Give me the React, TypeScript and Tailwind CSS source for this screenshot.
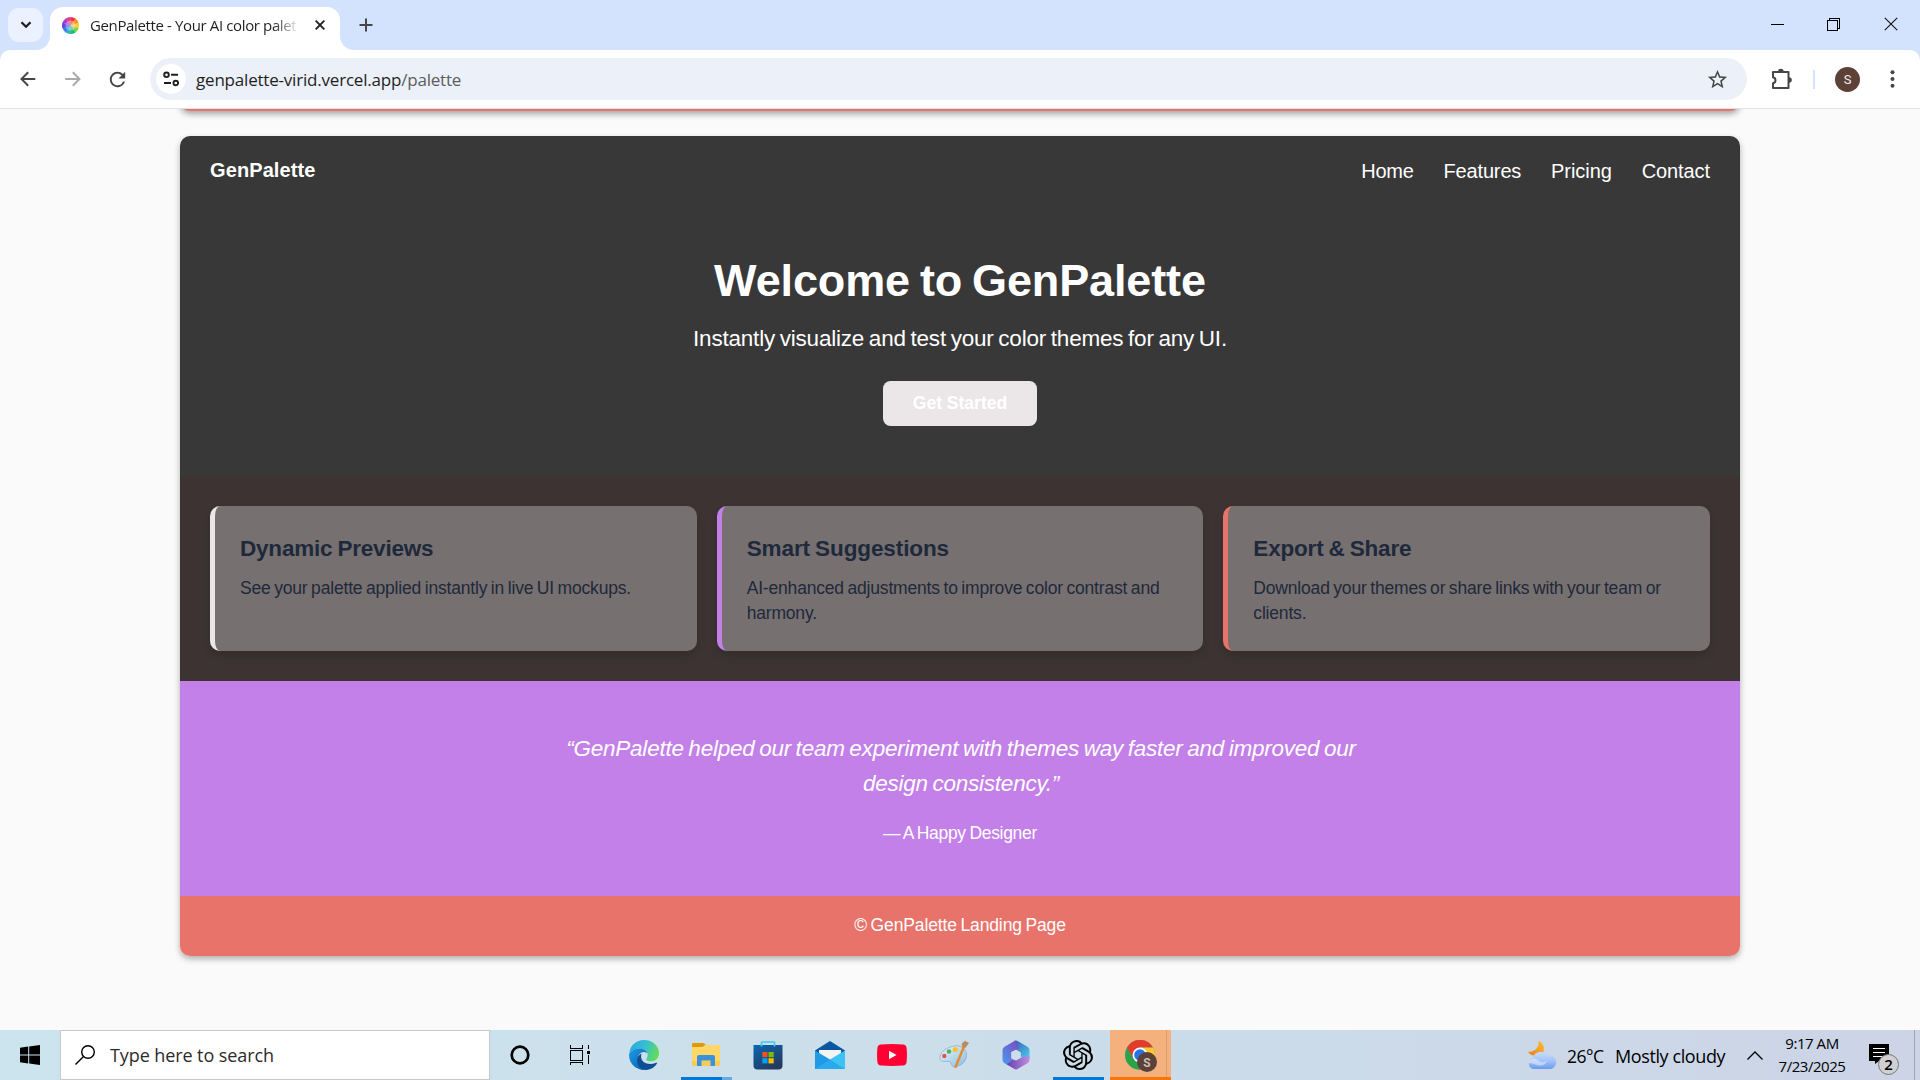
import type { ReactNode } from "react";
import { SiOpenai } from "react-icons/si";
import { MdStarBorder, MdRefresh } from "react-icons/md";

function TabFavicon() {
  const colors = ["#f0303e", "#f98d2b", "#fbd02f", "#7ed348", "#27b86a", "#28b5c8", "#3d7fe8", "#6a45d8", "#a13fd0", "#e03c8a"];
  return (
    <svg viewBox="-10 -10 20 20" className="h-[17px] w-[17px]">
      {colors.map((c, i) => {
        const a = ((i * 36 - 90) * Math.PI) / 180;
        const b = (((i + 1) * 36 - 88) * Math.PI) / 180;
        return (
          <g key={c} fill={c}>
            <path d={`M0 0L${10 * Math.cos(a)} ${10 * Math.sin(a)}A10 10 0 0 1 ${10 * Math.cos(b)} ${10 * Math.sin(b)}Z`} />
            <path fill="#fff" opacity=".35" d={`M0 0L${6 * Math.cos(a)} ${6 * Math.sin(a)}A6 6 0 0 1 ${6 * Math.cos(b)} ${6 * Math.sin(b)}Z`} />
          </g>
        );
      })}
    </svg>
  );
}

function TabStrip() {
  return (
    <div className="flex h-[50px] items-start bg-[#d3e2fd]">
      <div className="mt-2 ml-2 flex h-[34px] w-[35px] items-center justify-center rounded-[11px] bg-[#ebf1fe]">
        <svg viewBox="0 0 12 8" className="h-2 w-3" fill="none" stroke="#1f1f1f" strokeWidth="2.3">
          <path d="M1.5 1.2L6 5.7L10.5 1.2" />
        </svg>
      </div>
      <div className="relative mt-[7px] ml-[7px] flex h-[43px] w-[290px] items-center rounded-t-[13px] bg-white pb-[7px] pl-3">
        <svg viewBox="0 0 14 14" className="absolute bottom-0 -left-[14px] h-[14px] w-[14px]" fill="#fff">
          <path d="M14 0V14H0A14 14 0 0 0 14 0Z" />
        </svg>
        <svg viewBox="0 0 14 14" className="absolute -right-[14px] bottom-0 h-[14px] w-[14px]" fill="#fff">
          <path d="M0 0V14H14A14 14 0 0 1 0 0Z" />
        </svg>
        <TabFavicon />
        <span className="ml-[11px] w-[209px] overflow-hidden bg-gradient-to-r from-[#1f1f1f] from-88% to-transparent bg-clip-text text-[15px] leading-5 tracking-[-0.37px] whitespace-nowrap text-transparent">
          GenPalette - Your AI color palet
        </span>
        <svg viewBox="0 0 10 10" className="ml-4 h-[10px] w-[10px]" stroke="#1f1f1f" strokeWidth="1.9">
          <path d="M.7 .7L9.3 9.3M9.3 .7L.7 9.3" />
        </svg>
      </div>
      <svg viewBox="0 0 14 14" className="mt-[18px] ml-[19px] h-[14px] w-[14px]" stroke="#444746" strokeWidth="2">
        <path d="M7 .5V13.5M.5 7H13.5" />
      </svg>
      <div className="mt-[17px] ml-auto flex items-center pr-[22px]">
        <svg viewBox="0 0 14 14" className="mr-[42px] h-[14px] w-[14px]" stroke="#000" strokeWidth="1" shapeRendering="crispEdges">
          <path d="M0 7.5H13" />
        </svg>
        <svg viewBox="0 0 14 14" className="mr-[43px] h-[14px] w-[14px]" fill="none" stroke="#000" strokeWidth="1" shapeRendering="crispEdges">
          <path d="M.5 3.5H10.5V13.5H.5ZM2.5 3V1.5H12.5V11.5H11" />
        </svg>
        <svg viewBox="0 0 14 14" className="h-[14px] w-[14px]" stroke="#111" strokeWidth="1.1">
          <path d="M.8 .8L13.2 13.2M13.2 .8L.8 13.2" />
        </svg>
      </div>
    </div>
  );
}

function Toolbar() {
  return (
    <div className="bg-[#d3e2fd]">
      <div className="flex h-[59px] items-center rounded-t-[10px] border-b border-[#dfe1e3] bg-white">
        <svg viewBox="0 0 16 16" className="ml-5 h-4 w-4" fill="none" stroke="#444746" strokeWidth="2">
          <path d="M15.3 8H1.8M8.2 1.3L1.5 8L8.2 14.7" />
        </svg>
        <svg viewBox="0 0 16 16" className="ml-[29px] h-4 w-4" fill="none" stroke="#a9abab" strokeWidth="2">
          <path d="M.2 8H14M7.8 1.3L14.5 8L7.8 14.7" />
        </svg>
        <MdRefresh className="ml-[25px] h-[23px] w-[23px] text-[#444746]" />
        <div className="ml-[21px] flex h-[42px] w-[1597px] items-center rounded-full bg-[#ecf0f9] pl-[6px]">
          <div className="flex h-[30px] w-[30px] items-center justify-center rounded-full bg-white">
            <svg viewBox="0 0 16 16" className="h-4 w-4" fill="none" stroke="#1f1f1f" strokeWidth="1.9">
              <circle cx="3.5" cy="3.8" r="2.3" />
              <path d="M8 3.8H15M1 12H8" />
              <circle cx="12.8" cy="12" r="2.3" />
            </svg>
          </div>
          <div className="mt-px ml-[10px] text-[17px] leading-6 tracking-[-0.2px] text-[#1f1f1f]">
            genpalette-virid.vercel.app<span className="text-[#5a5d60]">/palette</span>
          </div>
          <MdStarBorder className="mr-[18px] ml-auto h-[23px] w-[23px] text-[#444746]" />
        </div>
        <svg viewBox="0 0 22 22" className="ml-6 h-[22px] w-[22px]" fill="none" stroke="#444746" strokeWidth="2" strokeLinejoin="round">
          <path d="M2 4H17.5V20H2V15.2C5.3 14.6 5.3 9.8 2 9.2Z" />
          <path fill="#444746" stroke="none" d="M7 3.5A2.8 2.8 0 0 1 12.6 3.5ZM18 9.2A2.8 2.8 0 0 1 18 14.8Z" />
        </svg>
        <div className="ml-5 h-[19px] w-[2px] bg-[#d3e2fd]" />
        <div className="ml-5 flex h-[25px] w-[25px] items-center justify-center rounded-full bg-[#5d4037] font-[Roboto] text-[13px] leading-none text-[#f1eeec]">S</div>
        <svg viewBox="0 0 5 18" className="ml-[30px] h-[18px] w-[5px]" fill="#444746">
          <circle cx="2.5" cy="2.2" r="2" />
          <circle cx="2.5" cy="9" r="2" />
          <circle cx="2.5" cy="15.8" r="2" />
        </svg>
      </div>
    </div>
  );
}

const navItems = [
  { label: "Home", cls: "tracking-[-0.25px]" },
  { label: "Features", cls: "tracking-[-0.14px]" },
  { label: "Pricing", cls: "tracking-[-0.05px]" },
  { label: "Contact", cls: "tracking-[-0.08px]" },
];

const features = [
  { title: "Dynamic Previews", titleCls: "tracking-[-0.2px]", lines: ["See your palette applied instantly in live UI mockups."], border: "border-[#ebe6e7]" },
  { title: "Smart Suggestions", titleCls: "tracking-[-0.1px]", lines: ["AI-enhanced adjustments to improve color contrast and", "harmony."], border: "border-[#c380e8]" },
  { title: "Export & Share", titleCls: "tracking-[-0.18px]", lines: ["Download your themes or share links with your team or", "clients."], border: "border-[#e7736a]" },
];

function LandingPreview() {
  return (
    <div className="mt-[25px] w-[1560px] overflow-hidden rounded-[10px] font-['Liberation_Sans',sans-serif] text-white shadow-[0_3px_6px_rgba(0,0,0,0.3)]">
      <div className="bg-[#383838]">
        <nav className="flex h-[70px] items-center justify-between px-[30px]">
          <div className="pb-[2px] text-[20px] leading-[30px] font-bold tracking-[0.1px]">GenPalette</div>
          <div className="flex gap-[29.800px] text-[20px] leading-[30px]">
            {navItems.map((n) => (
              <span key={n.label} className={n.cls}>{n.label}</span>
            ))}
          </div>
        </nav>
        <section className="flex flex-col items-center pt-[50px] pb-[50px]">
          <h1 className="text-[45px] leading-[50px] font-bold tracking-[-0.12px] [word-spacing:-2.5px]">Welcome to GenPalette</h1>
          <p className="mt-[15px] text-[22.5px] leading-[35px] tracking-[-0.21px] [word-spacing:-1.3px]">
            Instantly visualize and test your color themes for any UI.
          </p>
          <button className="mt-[25px] h-[45px] w-[154px] rounded-[7.5px] bg-[#ebe6e7] text-[17.5px] leading-[25px] font-bold">Get Started</button>
        </section>
      </div>
      <section className="grid grid-cols-3 gap-5 bg-[#3d3333] p-[30px]">
        {features.map((f) => (
          <div key={f.title} className={`h-[145px] rounded-[10px] border-l-[5px] bg-[#777070] p-[25px] text-[#1e293b] shadow-[0_5px_8px_rgba(0,0,0,0.14)] ${f.border}`}>
            <h3 className={`text-[22.5px] leading-[35px] font-bold [word-spacing:-1px] ${f.titleCls}`}>{f.title}</h3>
            <p className="mt-[10px] text-[17.5px] leading-[25px] tracking-[-0.18px] whitespace-nowrap [word-spacing:-1.1px]">
              {f.lines.map((l) => (
                <span key={l} className="block">{l}</span>
              ))}
            </p>
          </div>
        ))}
      </section>
      <section className="flex h-[215px] flex-col items-center bg-[#c380e8] pt-[50px] pl-[2px] text-center">
        <p className="text-[22.5px] leading-[35px] tracking-[-0.23px] whitespace-nowrap italic [word-spacing:-1.4px]">
          “GenPalette helped our team experiment with themes way faster and improved our
          <br />
          design consistency.”
        </p>
        <p className="mt-5 pr-[2px] text-[17.5px] leading-[25px] tracking-[-0.3px] [word-spacing:-1px]">— A Happy Designer</p>
      </section>
      <footer className="h-[60px] bg-[#e7736a] pt-[17px] text-center text-[17.5px] leading-[25px] tracking-[-0.13px] [word-spacing:-1.1px]">
        © GenPalette Landing Page
      </footer>
    </div>
  );
}

function Slot({ children, bar, className = "" }: { children: ReactNode; bar?: ReactNode; className?: string }) {
  return (
    <div className={`relative flex h-[50px] w-[62px] shrink-0 items-center justify-center ${className}`}>
      {children}
      {bar}
    </div>
  );
}

function EdgeIcon() {
  return (
    <svg viewBox="0 0 30 30" className="h-[30px] w-[30px]">
      <defs>
        <linearGradient id="edgeTop" x1="0" y1=".3" x2="1" y2=".6">
          <stop offset="0" stopColor="#2aa8e0" />
          <stop offset=".5" stopColor="#35c1d0" />
          <stop offset="1" stopColor="#66dd4f" />
        </linearGradient>
        <linearGradient id="edgeLow" x1="0" y1="0" x2="1" y2="1">
          <stop offset="0" stopColor="#1ba0e6" />
          <stop offset="1" stopColor="#0a57ad" />
        </linearGradient>
      </defs>
      <path fill="url(#edgeTop)" d="M.3 13C1.2 5.5 7.2 0 15 0C24 0 30 6.2 30 13.2C30 18.2 26.400 21.300 22.300 21.300C18.800 21.300 17.300 20.200 17.300 19.200C17.300 18.300 18.700 17.700 18.700 15.300C18.700 12 15.400 8.600 10.700 8.600C5.500 8.600 1.500 11.300 .3 13Z" />
      <path fill="url(#edgeLow)" d="M0 15C.4 11 5.200 8.500 10.600 8.500C14 8.500 17.500 10.500 18.200 13C13.500 9.900 8.600 14 8.600 19.200C8.600 24 12.200 28.400 16.500 29.900C7.500 30.500 0 24 0 15Z" />
      <path fill="#0e4f94" d="M12.500 13.500C9.700 14.700 8 17.300 8 20C8 25.800 12 30 17.200 30C22 29.700 25.800 27 28 23.500C28.300 22.900 27.800 22.400 27 22.800C20.500 25.700 11.500 23.500 12.100 15.800Z" />
    </svg>
  );
}

function ExplorerIcon() {
  return (
    <svg viewBox="0 0 28 24" className="-mt-px h-6 w-7">
      <path fill="#dd9a0b" d="M0 1A1 1 0 0 1 1 0H11.500L13.500 1.500L12 5H0Z" />
      <path fill="#ffd766" d="M0 4H10.500L13 2H27A1 1 0 0 1 28 3V22A1 1 0 0 1 27 23H1A1 1 0 0 1 0 22Z" />
      <path fill="#f9cb52" d="M0 18H28V22A1 1 0 0 1 27 23H1A1 1 0 0 1 0 22Z" />
      <path fill="#3a92dc" d="M5 14A2 2 0 0 1 7 12H21A2 2 0 0 1 23 14V23H18.500V17.500H9.500V23H5Z" />
    </svg>
  );
}

function StoreIcon() {
  return (
    <svg viewBox="0 0 30 30" className="h-[30px] w-[30px]">
      <defs>
        <linearGradient id="store" x1="0" y1="0" x2=".6" y2="1">
          <stop offset="0" stopColor="#0b67b5" />
          <stop offset="1" stopColor="#243a5e" />
        </linearGradient>
      </defs>
      <path fill="url(#store)" d="M.5 5H29.500V25.500A4 4 0 0 1 25.500 29.500H4.500A4 4 0 0 1 .5 25.500Z" />
      <path fill="none" stroke="#3ec9f4" strokeWidth="1.700" d="M8.500 6.500V2.700A.7 .7 0 0 1 9.200 2H20.800A.7 .7 0 0 1 21.500 2.700V6.500" />
      <path fill="#f25022" d="M9.300 12H14.500V17.200H9.300Z" />
      <path fill="#7fba00" d="M15.500 12H20.700V17.200H15.500Z" />
      <path fill="#00a4ef" d="M9.300 18.200H14.500V23.400H9.300Z" />
      <path fill="#ffb900" d="M15.500 18.200H20.700V23.400H15.500Z" />
    </svg>
  );
}

function MailIcon() {
  return (
    <svg viewBox="0 0 30 28" className="h-7 w-[30px]">
      <path fill="#0a56a0" d="M0 9.500L15 0L30 9.500V12H0Z" />
      <path fill="#f3f3f4" d="M4 9H26V16L15 22L4 16Z" />
      <path fill="#1f9be6" d="M0 9.500L15 18.500L30 28H0Z" />
      <path fill="#3bc3f5" d="M30 9.500L15 18.500L30 28Z" />
      <path fill="#2aa9ee" d="M0 28L15 18.500L30 28Z" />
    </svg>
  );
}

function YoutubeIcon() {
  return (
    <svg viewBox="0 0 30 22" className="h-[22px] w-[30px]">
      <path fill="#ff0033" d="M4 .5Q15 -.4 26 .5Q29.300 .9 29.600 4Q30.300 11 29.600 18Q29.300 21.100 26 21.500Q15 22.400 4 21.500Q.7 21.100 .4 18Q-.3 11 .4 4Q.7 .9 4 .5Z" />
      <path fill="#fff" d="M12 6.700L19.500 11L12 15.300Z" />
    </svg>
  );
}

function PaintIcon() {
  return (
    <svg viewBox="0 0 30 30" className="h-[30px] w-[30px]">
      <defs>
        <linearGradient id="palette" x1="0" y1="0" x2="1" y2="1">
          <stop offset="0" stopColor="#eaf6fd" />
          <stop offset="1" stopColor="#8dbde0" />
        </linearGradient>
      </defs>
      <path fill="url(#palette)" stroke="#7fa9c9" strokeWidth=".7" d="M13 6.500C20 4 27 8 27.500 14C28 21 22 27 15 26.500C11 26 13 22.500 10.500 21.500C7 20.500 2 23.500 1 18C.5 13 6 8.500 13 6.500Z" />
      <circle cx="5.300" cy="16" r="2.200" fill="#e4564b" />
      <circle cx="10" cy="11.500" r="2.300" fill="#54b05a" />
      <circle cx="16.300" cy="9.500" r="2.600" fill="#f7c32c" />
      <path stroke="#e58a2d" strokeWidth="2.400" strokeLinecap="round" d="M25 6.500L16.500 27" />
      <path fill="#b98c5c" d="M22.500 4L26 .8L30 3L26.500 7.800L23.300 6.800Z" />
    </svg>
  );
}

function M365Icon() {
  return (
    <svg viewBox="0 0 28 30" className="h-[30px] w-7">
      <defs>
        <linearGradient id="mA" x1="0" y1="1" x2=".8" y2="0">
          <stop offset="0" stopColor="#4a9bf0" />
          <stop offset="1" stopColor="#7a4fc4" />
        </linearGradient>
        <linearGradient id="mB" x1="0" y1="0" x2="1" y2="1">
          <stop offset="0" stopColor="#3358a8" />
          <stop offset="1" stopColor="#4fd3f2" />
        </linearGradient>
        <linearGradient id="mC" x1="0" y1="0" x2="1" y2="0">
          <stop offset="0" stopColor="#5b3fae" />
          <stop offset="1" stopColor="#c48be0" />
        </linearGradient>
      </defs>
      <path fill="url(#mB)" d="M12 1.200Q14 0 16 1.200L25.500 6.700Q27.500 8 27.500 10V19.500L18.500 16.500V12.500L10 8Z" />
      <path fill="url(#mC)" d="M27.500 16V19Q27.500 22 25.500 23.200L16 28.800Q14 30 12 28.800L4 24L10 19L14 20.500L19 17.500Z" />
      <path fill="url(#mA)" d="M13.500 .6L17 8.500L9.500 12V21L4.500 24.300L2.500 23.200Q.5 22 .5 20V10Q.5 8 2.500 6.700L12 1.200Z" />
      <path fill="#cdddea" d="M14 9.700L18.700 12.300V17.700L14 20.300L9.300 17.700V12.300Z" />
    </svg>
  );
}

function ChromeIcon() {
  return (
    <svg viewBox="0 0 32 32" className="h-8 w-8">
      <circle cx="15" cy="15" r="15" fill="#2ba24c" />
      <path fill="#e33b2e" d="M2 7.500A15 15 0 0 1 28 7.500H15L8.500 18.700Z" />
      <path fill="#fcc934" d="M28 7.500A15 15 0 0 1 15 30L21.500 18.700L15 7.500Z" />
      <circle cx="15" cy="15" r="7.500" fill="#fff" />
      <circle cx="15" cy="15" r="5.800" fill="#2673e8" />
      <circle cx="22" cy="22" r="10" fill="#5d4037" />
      <text x="22" y="26.500" textAnchor="middle" fill="#c9bdb8" fontFamily="Roboto" fontSize="12" fontWeight="700">S</text>
    </svg>
  );
}

function WeatherIcon() {
  return (
    <svg viewBox="0 0 30 30" className="h-[30px] w-[30px]">
      <defs>
        <linearGradient id="moon" x1="1" y1="0" x2="0" y2="1">
          <stop offset="0" stopColor="#f9c031" />
          <stop offset="1" stopColor="#ee7d1c" />
        </linearGradient>
        <linearGradient id="cloud" x1="0" y1="0" x2="0" y2="1">
          <stop offset="0" stopColor="#c5dbfb" />
          <stop offset=".5" stopColor="#a6c4f6" />
          <stop offset="1" stopColor="#6c9bee" />
        </linearGradient>
      </defs>
      <path fill="url(#moon)" d="M11.500 1C16 2.500 18.500 8 16 12.500C13 17 5 17.500 1 12C7 12 12.500 8 11.500 1Z" />
      <path fill="url(#cloud)" d="M6 29A5.800 5.800 0 0 1 5.500 18A8.500 8.500 0 0 1 20.500 15.500A6.800 6.800 0 0 1 24 29Z" />
      <path fill="#dfebfd" opacity=".6" d="M1 23A6 6 0 0 1 10 19.500Q14 24 20 21Q17 27 10 25Q5 23 1 23Z" />
    </svg>
  );
}

function Taskbar() {
  return (
    <div className="flex h-[50px] items-center bg-gradient-to-r from-[#cbe4ee] via-[#cbdeea] to-[#ccd4e6]">
      <div className="flex w-[60px] justify-center">
        <svg viewBox="0 0 20 20" className="h-5 w-5" fill="#000">
          <path d="M0 2.700L8.200 1.600V9.500H0ZM9.200 1.400L20 0V9.500H9.200ZM0 10.500H8.200V18.400L0 17.300ZM9.200 10.500H20V20L9.200 18.600Z" />
        </svg>
      </div>
      <div className="flex h-[50px] w-[430px] items-center border border-[#c9c9c9] bg-white pl-[14px]">
        <svg viewBox="0 0 20 20" className="h-5 w-5" fill="none" stroke="#000" strokeWidth="1.400">
          <circle cx="13" cy="7" r="6.300" />
          <path d="M8.500 11.500L.5 19.500" />
        </svg>
        <span className="ml-[15px] text-[18px] tracking-[-0.09px] text-[#2b2b2b]">Type here to search</span>
      </div>
      <div className="flex w-[60px] justify-center">
        <svg viewBox="0 0 20 20" className="h-5 w-5">
          <circle cx="10" cy="10" r="8.300" fill="none" stroke="#000" strokeWidth="2.700" />
        </svg>
      </div>
      <div className="mr-[3px] flex w-[60px] justify-center">
        <svg viewBox="0 0 20 20" className="h-5 w-5" fill="none" stroke="#000" shapeRendering="crispEdges">
          <path d="M.5 5.500H12.500V15.500H.5ZM.5 0V3.500H12.500V0M.5 20V17.500H12.500V20M18.500 0V4M18.500 10V19" />
          <path fill="#000" stroke="none" d="M17 6H20V9H17Z" />
        </svg>
      </div>
      <Slot><EdgeIcon /></Slot>
      <Slot
        bar={
          <div className="absolute bottom-0 left-[6px] flex h-[3px] w-[51px]">
            <div className="w-[41px] bg-[#0078d7]" />
            <div className="w-[10px] bg-[#66abe4]" />
          </div>
        }
      >
        <ExplorerIcon />
      </Slot>
      <Slot><StoreIcon /></Slot>
      <Slot><MailIcon /></Slot>
      <Slot><YoutubeIcon /></Slot>
      <Slot><PaintIcon /></Slot>
      <Slot><M365Icon /></Slot>
      <Slot bar={<div className="absolute bottom-0 left-[6px] h-[3px] w-[51px] bg-[#0078d7]" />}>
        <SiOpenai className="h-[30px] w-[30px] text-black" />
      </Slot>
      <div className="ml-px flex h-[50px] w-[61px] items-center border-b-[3px] border-[#ff7300] bg-[#f4b17e]">
        <div className="flex h-full w-[57px] items-center border-r border-[#d99c6c] pt-[5px] pl-[15px]">
          <ChromeIcon />
        </div>
      </div>
      <div className="ml-auto flex h-full items-center text-black">
        <WeatherIcon />
        <span className="mt-[2px] ml-[10px] w-[48px] text-[17.5px] tracking-[-0.5px]">26°C</span>
        <span className="mt-[2px] w-[132px] text-[18px] tracking-[-0.4px] whitespace-nowrap">Mostly cloudy</span>
        <svg viewBox="0 0 16 9" className="h-[9px] w-4" fill="none" stroke="#000" strokeWidth="1.300">
          <path d="M.5 8.500L8 1L15.500 8.500" />
        </svg>
        <div className="ml-[11px] flex w-[76px] flex-col items-center text-[15px] leading-[23px] tracking-[-0.45px]">
          <span>9:17 AM</span>
          <span>7/23/2025</span>
        </div>
        <div className="relative ml-[19px] h-5 w-5">
          <svg viewBox="0 0 20 20" className="-mt-[1px] h-5 w-5">
            <path fill="#000" d="M0 0H20V17H10L6 20V17H0Z" />
            <path stroke="#fff" strokeWidth="1.200" d="M4 4.500H16M4 8.500H16M4 12.500H16" />
          </svg>
          <div className="absolute top-[9px] left-[9px] flex h-[21px] w-[21px] items-center justify-center rounded-full border border-[#777] bg-[#d0d0d3] text-[15px] leading-none font-semibold">2</div>
        </div>
        <div className="ml-[25px] h-full w-[6px] border-l border-[#9ea6b5]" />
      </div>
    </div>
  );
}

export default function App() {
  return (
    <div className="flex h-[1080px] w-[1920px] flex-col overflow-hidden bg-[#fafafa] font-['Open_Sans',sans-serif]">
      <TabStrip />
      <Toolbar />
      <main className="flex flex-1 flex-col items-center overflow-hidden">
        <div className="-mt-10 h-[42px] w-[1560px] shrink-0 rounded-b-[10px] bg-[#e7736a] shadow-[0_3px_6px_rgba(0,0,0,0.35)]" />
        <LandingPreview />
      </main>
      <Taskbar />
    </div>
  );
}
